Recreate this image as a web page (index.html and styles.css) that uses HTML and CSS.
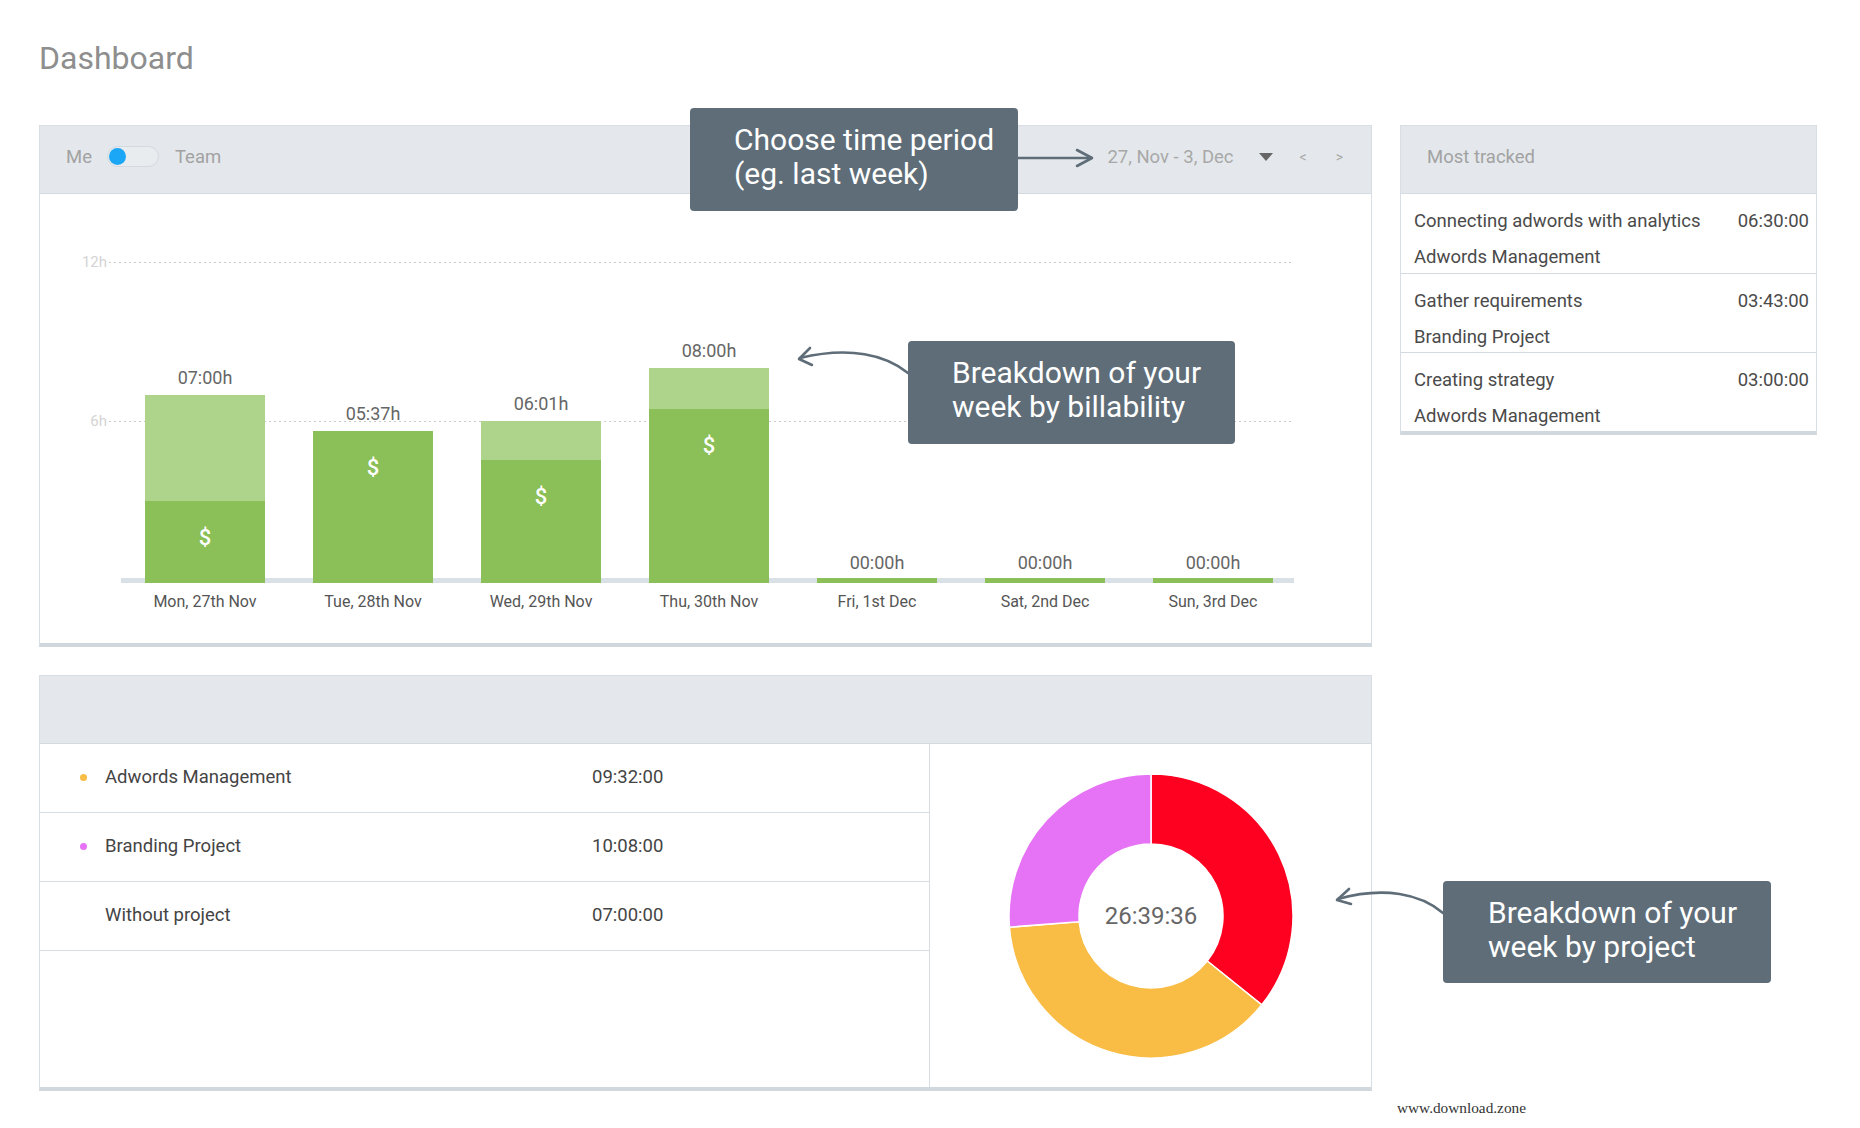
FILE: index.html
```html
<!DOCTYPE html>
<html lang="en">
<head>
<meta charset="utf-8">
<title>Dashboard</title>
<link rel="stylesheet" href="styles.css">
</head>
<body>
<div class="page">
  <h1 class="title">Dashboard</h1>
  <div class="grid">
    <section class="card week">
      <header class="card-head">
        <span>Me</span>
        <span class="toggle"><span class="knob"></span></span>
        <span>Team</span>
        <div class="period">
          <span class="date">27, Nov - 3, Dec</span>
          <span class="caret"></span>
          <span class="nav">&lt;</span>
          <span class="nav">&gt;</span>
        </div>
      </header>
      <div class="chart">
        <div class="plot">
          <div class="gridline g12"><span>12h</span></div>
          <div class="gridline g6"><span>6h</span></div>
          <div class="baseline"></div>
          <div class="cols">
            <div class="col"><span class="val">07:00h</span><div class="bar" style="height:188px"><div class="nonbill" style="height:106px"></div><div class="bill">$</div></div></div>
            <div class="col"><span class="val">05:37h</span><div class="bar" style="height:152px"><div class="nonbill" style="height:0px"></div><div class="bill">$</div></div></div>
            <div class="col"><span class="val">06:01h</span><div class="bar" style="height:162px"><div class="nonbill" style="height:39px"></div><div class="bill">$</div></div></div>
            <div class="col"><span class="val">08:00h</span><div class="bar" style="height:215px"><div class="nonbill" style="height:41px"></div><div class="bill">$</div></div></div>
            <div class="col"><span class="val zero">00:00h</span><div class="bar empty"></div></div>
            <div class="col"><span class="val zero">00:00h</span><div class="bar empty"></div></div>
            <div class="col"><span class="val zero">00:00h</span><div class="bar empty"></div></div>
          </div>
        </div>
        <div class="days">
          <span>Mon, 27th Nov</span>
          <span>Tue, 28th Nov</span>
          <span>Wed, 29th Nov</span>
          <span>Thu, 30th Nov</span>
          <span>Fri, 1st Dec</span>
          <span>Sat, 2nd Dec</span>
          <span>Sun, 3rd Dec</span>
        </div>
      </div>
    </section>

    <aside class="card tracked">
      <header class="card-head">Most tracked</header>
      <div class="t-row">
        <div class="t-line"><span>Connecting adwords with analytics</span><span>06:30:00</span></div>
        <div class="t-line"><span>Adwords Management</span></div>
      </div>
      <div class="t-row">
        <div class="t-line"><span>Gather requirements</span><span>03:43:00</span></div>
        <div class="t-line"><span>Branding Project</span></div>
      </div>
      <div class="t-row">
        <div class="t-line"><span>Creating strategy</span><span>03:00:00</span></div>
        <div class="t-line"><span>Adwords Management</span></div>
      </div>
    </aside>

    <section class="card projects">
      <header class="card-head"></header>
      <div class="p-body">
        <div class="p-list">
          <div class="p-row"><span class="dot orange"></span><span class="p-name">Adwords Management</span><span>09:32:00</span></div>
          <div class="p-row"><span class="dot pink"></span><span class="p-name">Branding Project</span><span>10:08:00</span></div>
          <div class="p-row"><span class="dot"></span><span class="p-name">Without project</span><span>07:00:00</span></div>
        </div>
        <div class="p-chart">
          <svg class="donut" width="284" height="284" viewBox="0 0 284 284">
            <path fill="#fe0020" stroke="#fff" stroke-width="1.5" d="M142,0 A142,142 0 0 1 252.8,230.8 L198.2,187 A72,72 0 0 0 142,70 Z"/>
            <path fill="#f9bc45" stroke="#fff" stroke-width="1.5" d="M252.8,230.8 A142,142 0 0 1 0.44,153.14 L70.22,147.65 A72,72 0 0 0 198.2,187 Z"/>
            <path fill="#e673f5" stroke="#fff" stroke-width="1.5" d="M0.44,153.14 A142,142 0 0 1 142,0 L142,70 A72,72 0 0 0 70.22,147.65 Z"/>
            <text x="142" y="150" text-anchor="middle" class="donut-total">26:39:36</text>
          </svg>
        </div>
      </div>
    </section>
  </div>

  <svg class="arrows" width="1860" height="1128" viewBox="0 0 1860 1128">
    <g fill="none" stroke="#5e6d78" stroke-width="2.6" stroke-linecap="round" stroke-linejoin="round">
      <path d="M1018,158 L1091,158"/>
      <path d="M1077,150 L1092,158 L1077,166"/>
      <path d="M908,373 C886,355 850,346 800,358"/>
      <path d="M810,348 L799,359 L812,365"/>
      <path d="M1443,913 C1421,894 1384,886 1338,899"/>
      <path d="M1349,889 L1337,900 L1351,904"/>
    </g>
  </svg>

  <div class="callout c1">Choose time period<br>(eg. last week)</div>
  <div class="callout c2">Breakdown of your<br>week by billability</div>
  <div class="callout c3">Breakdown of your<br>week by project</div>

  <div class="watermark">www.download.zone</div>
</div>
</body>
</html>
```

FILE: styles.css
```css
body {
  margin: 0;
  background: #fff;
  font-family: Roboto, "Liberation Sans", Arial, sans-serif;
}

.page {
  position: relative;
  width: 1860px;
  height: 1128px;
  box-sizing: border-box;
  padding: 40px 0 0 39px;
  overflow: hidden;
}

.title {
  margin: 0 0 49px;
  font-size: 32px;
  line-height: 36px;
  font-weight: 400;
  color: #8e8e8e;
}

.grid {
  display: grid;
  grid-template-columns: 1333px 417px;
  column-gap: 28px;
  row-gap: 28px;
  align-items: start;
}

.card {
  background: #fff;
  border: 1px solid #d8dee4;
  border-bottom: 4px solid #d0d8de;
  box-sizing: border-box;
}

.card-head {
  height: 68px;
  box-sizing: border-box;
  background: #e4e8ec;
  border-bottom: 1px solid #d3dae0;
  display: flex;
  align-items: center;
  padding: 0 28px 6px 26px;
  font-size: 18.5px;
  color: #a2a2a2;
}

/* toggle */
.toggle {
  width: 52px;
  height: 21px;
  box-sizing: border-box;
  margin: 0 16px 0 15px;
  border: 1px solid #d2d9df;
  border-radius: 11px;
  background: #e8ecef;
  display: flex;
  align-items: center;
  padding-left: 1px;
}

.knob {
  width: 17px;
  height: 17px;
  border-radius: 50%;
  background: #1ba7f5;
}

.period {
  margin-left: auto;
  display: flex;
  align-items: center;
}

.date {
  color: #a8a8a8;
}

.caret {
  width: 0;
  height: 0;
  border-left: 7.5px solid transparent;
  border-right: 7.5px solid transparent;
  border-top: 8px solid #666;
  margin: 0 27px 0 25px;
}

.nav {
  font-size: 14px;
  color: #a8a8a8;
}

.nav + .nav {
  margin-left: 29px;
}

/* chart */
.chart {
  height: 449px;
  box-sizing: border-box;
  padding: 68px 0 31px 81px;
}

.plot {
  position: relative;
  width: 1176px;
  height: 321px;
}

.gridline {
  position: absolute;
  left: -12px;
  width: 1185px;
  height: 1px;
  background-image: linear-gradient(to right, #c9c9c9 0 2px, transparent 2px);
  background-size: 5px 1px;
}

.g12 { top: 0; }
.g6 { top: 159px; }

.gridline span {
  position: absolute;
  right: 100%;
  margin-right: 2px;
  top: -9px;
  font-size: 15px;
  line-height: 18px;
  color: #d4d4d4;
}

.baseline {
  position: absolute;
  left: 0;
  bottom: 0;
  width: 1173px;
  height: 5px;
  background: #d9e0e6;
}

.cols {
  position: relative;
  display: grid;
  grid-template-columns: repeat(7, 168px);
  height: 100%;
}

.col {
  display: flex;
  flex-direction: column;
  align-items: center;
  justify-content: flex-end;
}

.val {
  font-size: 18px;
  line-height: 22px;
  color: #666;
  margin-bottom: 6px;
}

.val.zero {
  margin-bottom: 4px;
}

.bar {
  width: 120px;
  display: flex;
  flex-direction: column;
}

.bar.empty {
  height: 5px;
  background: #8bbf57;
}

.nonbill {
  background: #aed38a;
}

.bill {
  flex: 1;
  background: #8bbf57;
  color: #fff;
  text-align: center;
  font-size: 22px;
  line-height: 26px;
  font-weight: 500;
  padding-top: 24px;
  box-sizing: border-box;
}

.days {
  display: grid;
  grid-template-columns: repeat(7, 168px);
  margin-top: 9px;
  font-size: 16px;
  line-height: 20px;
  color: #555;
  text-align: center;
}

/* most tracked */
.t-row {
  height: 79px;
  box-sizing: border-box;
  padding: 9px 7px 0 13px;
  font-size: 18.5px;
  line-height: 36px;
  color: #4a4a4a;
}

.t-row + .t-row {
  border-top: 1px solid #d3dae0;
}

.t-line {
  display: flex;
  justify-content: space-between;
}

/* projects */
.p-body {
  display: grid;
  grid-template-columns: 890px 1fr;
  height: 343px;
}

.p-list {
  border-right: 1px solid #d6dde3;
}

.p-row {
  height: 69px;
  box-sizing: border-box;
  border-bottom: 1px solid #d6dde3;
  display: flex;
  align-items: center;
  padding: 0 0 2px 40px;
  font-size: 18.5px;
  color: #444;
}

.dot {
  width: 7px;
  height: 7px;
  border-radius: 50%;
  margin-right: 18px;
}

.dot.orange { background: #f9bc45; }
.dot.pink { background: #e673f5; }

.p-name {
  width: 487px;
}

.p-chart {
  display: flex;
  align-items: center;
  justify-content: center;
}

.donut-total {
  font-family: Roboto, "Liberation Sans", sans-serif;
  font-size: 24px;
  fill: #666;
}

/* annotations */
.arrows {
  position: absolute;
  left: 0;
  top: 0;
  pointer-events: none;
}

.callout {
  position: absolute;
  box-sizing: border-box;
  background: #5e6d78;
  color: #fff;
  border-radius: 4px;
  padding: 15px 0 0 44px;
  font-size: 30px;
  line-height: 34px;
}

.c1 { left: 690px; top: 108px; width: 328px; height: 103px; }
.c2 { left: 908px; top: 341px; width: 327px; height: 103px; }
.c3 { left: 1443px; top: 881px; width: 328px; height: 102px; padding-left: 45px; }

.watermark {
  position: absolute;
  left: 1397px;
  top: 1099px;
  font-family: "Liberation Serif", "Times New Roman", serif;
  font-size: 15.3px;
  line-height: 18px;
  color: #333;
}
```
